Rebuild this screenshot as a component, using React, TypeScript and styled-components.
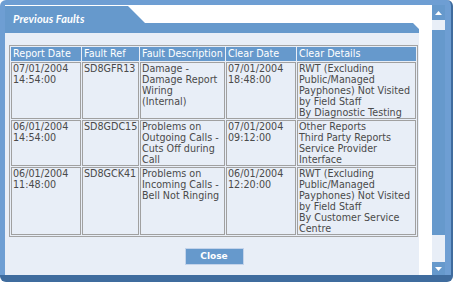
import React from "react";
import styled, { createGlobalStyle } from "styled-components";

const GlobalStyle = createGlobalStyle`
  html, body {
    margin: 0;
    padding: 0;
    background: #fff;
  }
`;

const Window = styled.div`
  box-sizing: border-box;
  width: 453px;
  height: 282px;
  display: flex;
  padding: 5px 6px 0 5px;
  background: #6e9ed3;
  border-right: 2px solid #3f6c9e;
  border-bottom: 7px solid #3f6c9e;
  border-radius: 6px;
`;

const Inner = styled.div`
  flex: 1;
  display: flex;
  gap: 13px;
  background: #fff;
`;

const Main = styled.div`
  width: 414px;
  display: flex;
  flex-direction: column;
`;

const Header = styled.div`
  flex: none;
  height: 28px;
  box-sizing: border-box;
  padding: 7px 0 0 8px;
  background: #6699cc;
  clip-path: polygon(0 1px, 123px 1px, 140px 18px, 408px 18px, 414px 24px, 414px 28px, 0 28px);
`;

const Title = styled.div`
  font-family: Lato, "Liberation Sans", sans-serif;
  font-size: 11px;
  font-weight: bold;
  font-style: italic;
  line-height: 14px;
  letter-spacing: 0.1px;
  color: #fff;
`;

const Body = styled.div`
  flex: 1;
  display: flex;
  flex-direction: column;
  align-items: flex-start;
  padding: 12px 0 0 4px;
  background: #e8eef7;
`;

const Table = styled.table`
  width: 409px;
  table-layout: fixed;
  border-collapse: separate;
  border-spacing: 1px;
  border: 1px solid #a3a3a3;
  font-family: "DejaVu Sans", Verdana, sans-serif;
  font-size: 9.6px;
  color: #4a4a4a;
`;

const Th = styled.th<{ $w: number }>`
  box-sizing: border-box;
  width: ${(p) => p.$w}px;
  padding: 0 1px;
  border: 1px solid #6699cc;
  background: #6699cc;
  color: #fff;
  font-weight: normal;
  text-align: left;
  line-height: 12px;
  white-space: nowrap;
`;

const Td = styled.td`
  padding: 0 1px;
  border: 1px solid #a0a0a0;
  vertical-align: top;
  line-height: 11px;
  white-space: nowrap;
`;

const Footer = styled.div`
  align-self: center;
  margin-top: 11px;
`;

const Button = styled.button`
  display: block;
  width: 59px;
  height: 17px;
  padding: 0;
  border: 1px solid #c3d3ea;
  background: #6699cc;
  color: #fff;
  font-family: "DejaVu Sans", Verdana, sans-serif;
  font-size: 9px;
  font-weight: bold;
  line-height: 15px;
  cursor: pointer;
`;

const Scrollbar = styled.div`
  width: 13px;
  display: flex;
  flex-direction: column;
`;

const Arrow = styled.div<{ $h: number }>`
  flex: none;
  height: ${(p) => p.$h}px;
  display: flex;
  align-items: center;
  justify-content: center;
  background: #6699cc;
`;

const Track = styled.div`
  flex: 1;
  display: flex;
  padding: 10px 0 27px;
  background: #e8eef7;
`;

const Thumb = styled.div`
  flex: 1;
  background: #6699cc;
`;

const columns = [
  { label: "Report Date", w: 70 },
  { label: "Fault Ref", w: 57 },
  { label: "Fault Description", w: 85 },
  { label: "Clear Date", w: 70 },
  { label: "Clear Details", w: 119 },
];

const faults = [
  {
    reported: ["07/01/2004", "14:54:00"],
    ref: "SD8GFR13",
    description: ["Damage -", "Damage Report", "Wiring", "(Internal)"],
    cleared: ["07/01/2004", "18:48:00"],
    details: ["RWT (Excluding", "Public/Managed", "Payphones) Not Visited", "by Field Staff", "By Diagnostic Testing"],
  },
  {
    reported: ["06/01/2004", "14:54:00"],
    ref: "SD8GDC15",
    description: ["Problems on", "Outgoing Calls -", "Cuts Off during", "Call"],
    cleared: ["07/01/2004", "09:12:00"],
    details: ["Other Reports", "Third Party Reports", "Service Provider", "Interface"],
  },
  {
    reported: ["06/01/2004", "11:48:00"],
    ref: "SD8GCK41",
    description: ["Problems on", "Incoming Calls -", "Bell Not Ringing"],
    cleared: ["06/01/2004", "12:20:00"],
    details: ["RWT (Excluding", "Public/Managed", "Payphones) Not Visited", "by Field Staff", "By Customer Service", "Centre"],
  },
];

const Lines = ({ lines }: { lines: string[] }) => (
  <>
    {lines.map((line, i) => (
      <React.Fragment key={i}>
        {i > 0 && <br />}
        {line}
      </React.Fragment>
    ))}
  </>
);

const Triangle = ({ up }: { up?: boolean }) => (
  <svg width="7" height="4" viewBox="0 0 7 4">
    <path d={up ? "M0 4 L3.5 0 L7 4 Z" : "M0 0 L7 0 L3.5 4 Z"} fill="#fff" />
  </svg>
);

const App = () => {
  return (
    <>
      <GlobalStyle />
      <Window>
        <Inner>
          <Main>
            <Header>
              <Title>Previous Faults</Title>
            </Header>
            <Body>
              <Table>
                <thead>
                  <tr>
                    {columns.map((c) => (
                      <Th key={c.label} $w={c.w}>{c.label}</Th>
                    ))}
                  </tr>
                </thead>
                <tbody>
                  {faults.map((f) => (
                    <tr key={f.ref}>
                      <Td><Lines lines={f.reported} /></Td>
                      <Td>{f.ref}</Td>
                      <Td><Lines lines={f.description} /></Td>
                      <Td><Lines lines={f.cleared} /></Td>
                      <Td><Lines lines={f.details} /></Td>
                    </tr>
                  ))}
                </tbody>
              </Table>
              <Footer>
                <Button>Close</Button>
              </Footer>
            </Body>
          </Main>
          <Scrollbar>
            <Arrow $h={15}><Triangle up /></Arrow>
            <Track><Thumb /></Track>
            <Arrow $h={13}><Triangle /></Arrow>
          </Scrollbar>
        </Inner>
      </Window>
    </>
  );
};

export default App;
